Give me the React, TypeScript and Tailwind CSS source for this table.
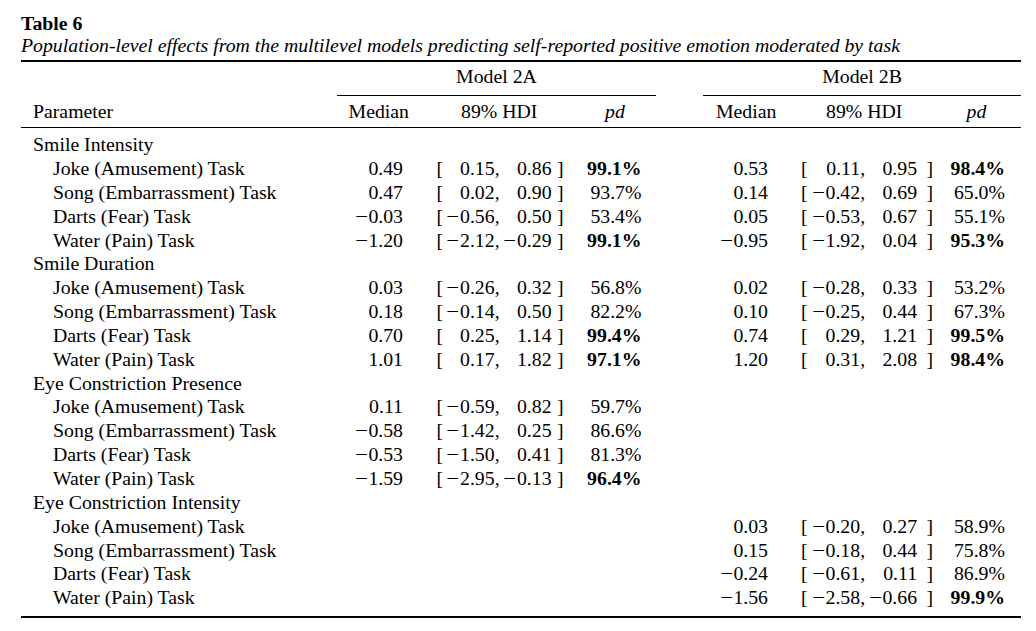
import React from 'react';

type Stat = {
  median: string;
  lo: string;
  hi: string;
  pd: string;
  bold?: boolean;
};

type Task = {
  task: string;
  a?: Stat;
  b?: Stat;
};

type Group = {
  name: string;
  tasks: Task[];
};

const groups: Group[] = [
  {
    name: 'Smile Intensity',
    tasks: [
      { task: 'Joke (Amusement) Task', a: { median: '0.49', lo: '0.15', hi: '0.86', pd: '99.1%', bold: true }, b: { median: '0.53', lo: '0.11', hi: '0.95', pd: '98.4%', bold: true } },
      { task: 'Song (Embarrassment) Task', a: { median: '0.47', lo: '0.02', hi: '0.90', pd: '93.7%' }, b: { median: '0.14', lo: '−0.42', hi: '0.69', pd: '65.0%' } },
      { task: 'Darts (Fear) Task', a: { median: '−0.03', lo: '−0.56', hi: '0.50', pd: '53.4%' }, b: { median: '0.05', lo: '−0.53', hi: '0.67', pd: '55.1%' } },
      { task: 'Water (Pain) Task', a: { median: '−1.20', lo: '−2.12', hi: '−0.29', pd: '99.1%', bold: true }, b: { median: '−0.95', lo: '−1.92', hi: '0.04', pd: '95.3%', bold: true } },
    ],
  },
  {
    name: 'Smile Duration',
    tasks: [
      { task: 'Joke (Amusement) Task', a: { median: '0.03', lo: '−0.26', hi: '0.32', pd: '56.8%' }, b: { median: '0.02', lo: '−0.28', hi: '0.33', pd: '53.2%' } },
      { task: 'Song (Embarrassment) Task', a: { median: '0.18', lo: '−0.14', hi: '0.50', pd: '82.2%' }, b: { median: '0.10', lo: '−0.25', hi: '0.44', pd: '67.3%' } },
      { task: 'Darts (Fear) Task', a: { median: '0.70', lo: '0.25', hi: '1.14', pd: '99.4%', bold: true }, b: { median: '0.74', lo: '0.29', hi: '1.21', pd: '99.5%', bold: true } },
      { task: 'Water (Pain) Task', a: { median: '1.01', lo: '0.17', hi: '1.82', pd: '97.1%', bold: true }, b: { median: '1.20', lo: '0.31', hi: '2.08', pd: '98.4%', bold: true } },
    ],
  },
  {
    name: 'Eye Constriction Presence',
    tasks: [
      { task: 'Joke (Amusement) Task', a: { median: '0.11', lo: '−0.59', hi: '0.82', pd: '59.7%' } },
      { task: 'Song (Embarrassment) Task', a: { median: '−0.58', lo: '−1.42', hi: '0.25', pd: '86.6%' } },
      { task: 'Darts (Fear) Task', a: { median: '−0.53', lo: '−1.50', hi: '0.41', pd: '81.3%' } },
      { task: 'Water (Pain) Task', a: { median: '−1.59', lo: '−2.95', hi: '−0.13', pd: '96.4%', bold: true } },
    ],
  },
  {
    name: 'Eye Constriction Intensity',
    tasks: [
      { task: 'Joke (Amusement) Task', b: { median: '0.03', lo: '−0.20', hi: '0.27', pd: '58.9%' } },
      { task: 'Song (Embarrassment) Task', b: { median: '0.15', lo: '−0.18', hi: '0.44', pd: '75.8%' } },
      { task: 'Darts (Fear) Task', b: { median: '−0.24', lo: '−0.61', hi: '0.11', pd: '86.9%' } },
      { task: 'Water (Pain) Task', b: { median: '−1.56', lo: '−2.58', hi: '−0.66', pd: '99.9%', bold: true } },
    ],
  },
];

const gridCols = 'grid grid-cols-[316px_74px_159px_86px_47px_73px_159px_86px]';

// math-style minus: a slightly longer dash than the text font's
const Num: React.FC<{ value: string }> = ({ value }) => {
  if (value.startsWith('−')) {
    return (
      <>
        <span className="inline-block mr-[1.5px] scale-x-[1.15]">−</span>
        {value.slice(1)}
      </>
    );
  }
  return <>{value}</>;
};

// one model's three cells: median, [lo, hi], pd
const ModelCells: React.FC<{ stat?: Stat; model: 'a' | 'b' }> = ({ stat, model }) => {
  if (!stat) {
    return (
      <>
        <div />
        <div />
        <div />
      </>
    );
  }
  const isA = model === 'a';
  return (
    <>
      <div className="pr-[8px] text-right"><Num value={stat.median} /></div>
      <div className={`flex ${isA ? 'pl-[25.5px]' : 'pl-[25px]'}`}>
        <span>[</span>
        <span className={`text-right ${isA ? 'w-[56.5px]' : 'w-[57.5px]'}`}><Num value={stat.lo} />,</span>
        <span className="w-[52px] text-right"><Num value={stat.hi} /></span>
        <span className={isA ? 'ml-[5.5px]' : 'ml-[9.5px]'}>]</span>
      </div>
      <div className={`text-right ${isA ? 'pr-[14.5px]' : 'pr-[16px]'} ${stat.bold ? 'font-bold' : ''}`}>{stat.pd}</div>
    </>
  );
};

export default function App() {
  return (
    <div className="w-[1036px] h-[631px] bg-white text-black font-['Liberation_Serif','Times_New_Roman',serif] text-[19.8px] overflow-hidden">
      <div className="ml-[21px] w-[1000px] pt-[12px]">
        <div className="leading-[22px] font-bold">Table 6</div>
        <div className="leading-[22px] italic whitespace-nowrap">
          Population-level effects from the multilevel models predicting self-reported positive emotion moderated by task
        </div>
        <div className="mt-[4px] h-[2px] bg-black" />

        <div className="leading-[23.85px]">
          <div className={`${gridCols} h-[34px]`}>
            <div />
            <div className="col-span-3 pt-[2.8px] text-center border-b border-black">Model 2A</div>
            <div />
            <div className="col-span-3 pt-[2.8px] text-center border-b border-black">Model 2B</div>
          </div>

          <div className={`${gridCols} h-[31px] pt-[3.8px]`}>
            <div className="pl-[12px]">Parameter</div>
            <div className="pr-[2px] text-right">Median</div>
            <div className="pl-[50px]">89% HDI</div>
            <div className="pl-[35px] italic">pd</div>
            <div />
            <div className="pl-[13px]">Median</div>
            <div className="pl-[50px]">89% HDI</div>
            <div className="pl-[31.5px] italic">pd</div>
          </div>
          <div className="h-px bg-black" />

          <div className="pt-[5.2px]">
            {groups.map((group) => (
              <React.Fragment key={group.name}>
                <div className="pl-[12px] h-[23.85px]">{group.name}</div>
                {group.tasks.map((row) => (
                  <div key={group.name + row.task} className={`${gridCols} h-[23.85px] whitespace-nowrap`}>
                    <div className="pl-[32px]">{row.task}</div>
                    <ModelCells stat={row.a} model="a" />
                    <div />
                    <ModelCells stat={row.b} model="b" />
                  </div>
                ))}
              </React.Fragment>
            ))}
          </div>
          <div className="mt-[6.3px] h-[2px] bg-black" />
        </div>
      </div>
    </div>
  );
}
